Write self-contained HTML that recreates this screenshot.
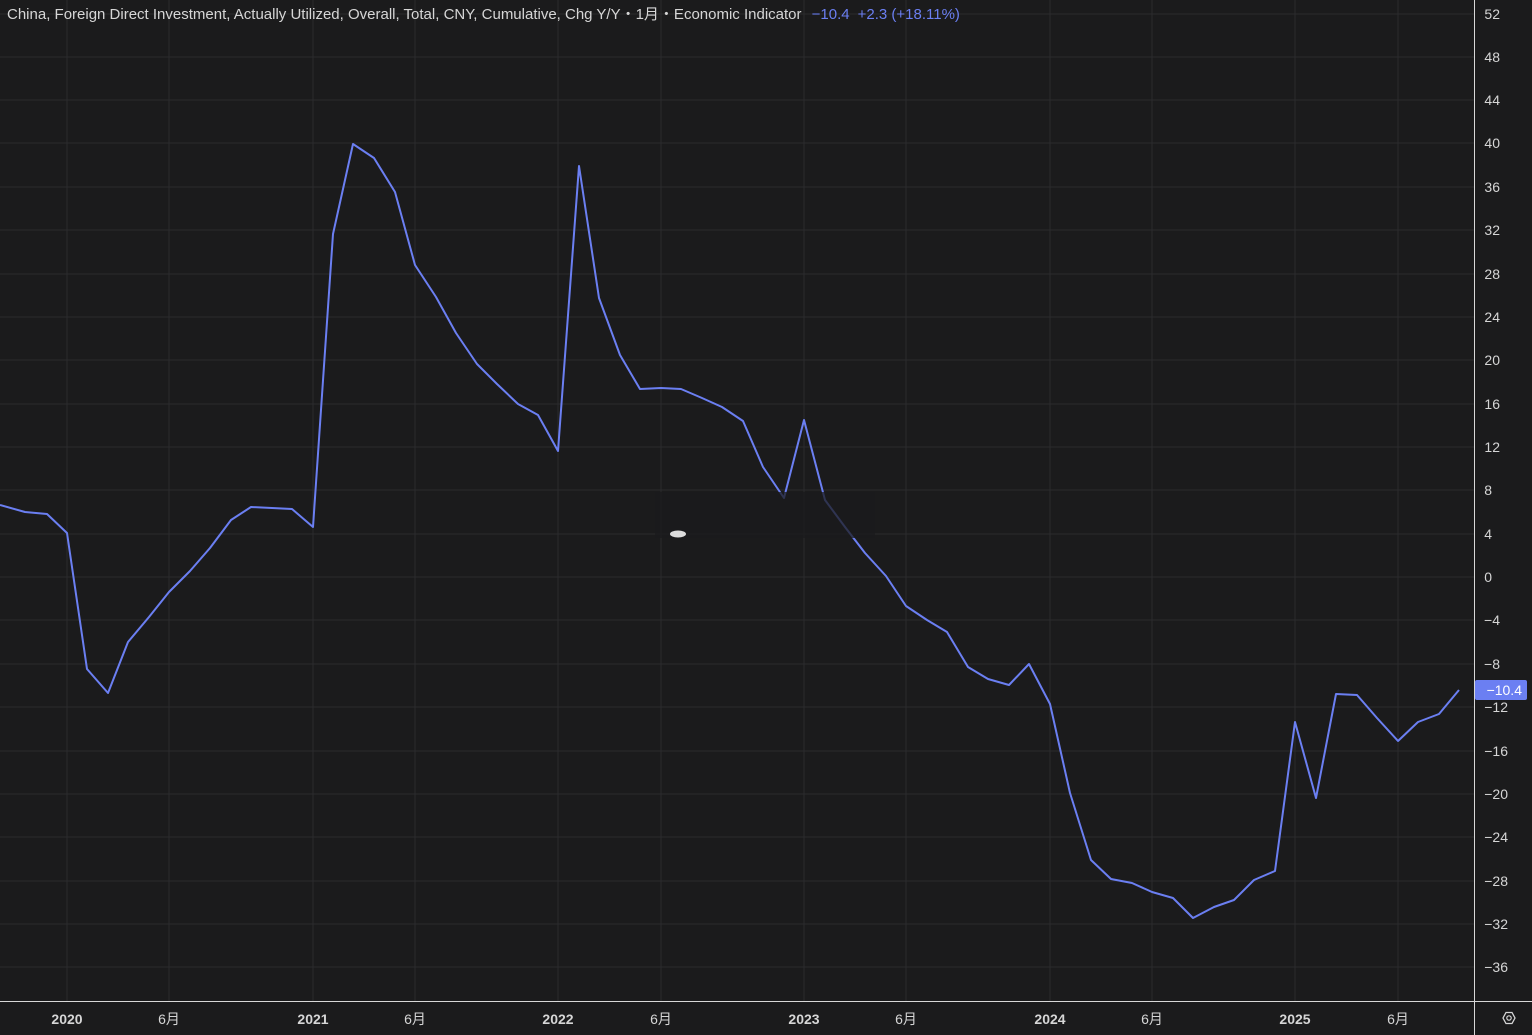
<!DOCTYPE html>
<html><head><meta charset="utf-8"><style>
html,body{margin:0;padding:0;background:#1b1b1c;width:1532px;height:1035px;overflow:hidden}
svg{display:block}
text{font-family:"Liberation Sans","Noto Sans CJK SC",sans-serif}
</style></head><body>
<svg width="1532" height="1035" viewBox="0 0 1532 1035" xmlns="http://www.w3.org/2000/svg">
<rect width="1532" height="1035" fill="#1b1b1c"/>
<g stroke="#2b2b2d" stroke-width="1">
<line x1="0" y1="14" x2="1474" y2="14"/><line x1="0" y1="57" x2="1474" y2="57"/><line x1="0" y1="100" x2="1474" y2="100"/><line x1="0" y1="143" x2="1474" y2="143"/><line x1="0" y1="187" x2="1474" y2="187"/><line x1="0" y1="230" x2="1474" y2="230"/><line x1="0" y1="274" x2="1474" y2="274"/><line x1="0" y1="317" x2="1474" y2="317"/><line x1="0" y1="360" x2="1474" y2="360"/><line x1="0" y1="404" x2="1474" y2="404"/><line x1="0" y1="447" x2="1474" y2="447"/><line x1="0" y1="490" x2="1474" y2="490"/><line x1="0" y1="534" x2="1474" y2="534"/><line x1="0" y1="577" x2="1474" y2="577"/><line x1="0" y1="620" x2="1474" y2="620"/><line x1="0" y1="664" x2="1474" y2="664"/><line x1="0" y1="707" x2="1474" y2="707"/><line x1="0" y1="751" x2="1474" y2="751"/><line x1="0" y1="794" x2="1474" y2="794"/><line x1="0" y1="837" x2="1474" y2="837"/><line x1="0" y1="881" x2="1474" y2="881"/><line x1="0" y1="924" x2="1474" y2="924"/><line x1="0" y1="967" x2="1474" y2="967"/>
<line x1="67" y1="0" x2="67" y2="1001"/><line x1="169" y1="0" x2="169" y2="1001"/><line x1="313" y1="0" x2="313" y2="1001"/><line x1="415" y1="0" x2="415" y2="1001"/><line x1="558" y1="0" x2="558" y2="1001"/><line x1="661" y1="0" x2="661" y2="1001"/><line x1="804" y1="0" x2="804" y2="1001"/><line x1="906" y1="0" x2="906" y2="1001"/><line x1="1050" y1="0" x2="1050" y2="1001"/><line x1="1152" y1="0" x2="1152" y2="1001"/><line x1="1295" y1="0" x2="1295" y2="1001"/><line x1="1398" y1="0" x2="1398" y2="1001"/>
</g>
<line x1="1474.5" y1="0" x2="1474.5" y2="1035" stroke="#d8d8d8" stroke-width="1"/>
<line x1="0" y1="1001.5" x2="1532" y2="1001.5" stroke="#d8d8d8" stroke-width="1"/>
<polyline fill="none" stroke="#6b7ff2" stroke-width="2" stroke-linejoin="round" points="0,505 25,512 47,514 67,533 87,669 108,693 128,642 149,617 169,592 190,571 210,548 231,520 251,507 272,508 292,509 313,527 333,234 353,144 374,158 395,192 415,265 436,297 456,333 477,364 497,384 518,404 538,415 558,451 579,166 599,298 620,355 640,389 661,388 681,389 702,398 722,407 743,421 763,467 784,498 804,420 825,500 845,527 865,553 886,576 906,606 927,620 947,632 968,667 988,679 1009,685 1029,664 1050,704 1070,793 1091,860 1111,879 1132,883 1152,892 1173,898 1193,918 1214,907 1234,900 1254,880 1275,871 1295,722 1316,798 1336,694 1357,695 1377,718 1398,741 1418,722 1439,714 1459,690"/>
<rect x="655" y="492" width="220" height="46" fill="#1b1b1c" opacity="0.75"/>
<ellipse cx="678" cy="534" rx="8" ry="3.5" fill="#dcdcdc"/>
<g fill="#d6d6d6" font-size="14" text-anchor="end">
<text x="1500" y="19">52</text><text x="1500" y="62">48</text><text x="1500" y="105">44</text><text x="1500" y="148">40</text><text x="1500" y="192">36</text><text x="1500" y="235">32</text><text x="1500" y="279">28</text><text x="1500" y="322">24</text><text x="1500" y="365">20</text><text x="1500" y="409">16</text><text x="1500" y="452">12</text><text x="1492" y="495">8</text><text x="1492" y="539">4</text><text x="1492" y="582">0</text><text x="1500" y="625">−4</text><text x="1500" y="669">−8</text><text x="1508" y="712">−12</text><text x="1508" y="756">−16</text><text x="1508" y="799">−20</text><text x="1508" y="842">−24</text><text x="1508" y="886">−28</text><text x="1508" y="929">−32</text><text x="1508" y="972">−36</text>
</g>
<rect x="1475" y="680" width="52" height="20" rx="2" fill="#6b7ff2"/>
<text x="1522" y="695" fill="#fff" font-size="14" text-anchor="end">−10.4</text>
<g fill="#d6d6d6" font-size="14" text-anchor="middle">
<text x="67" y="1024" font-weight="bold">2020</text><text x="169" y="1024">6月</text>
<text x="313" y="1024" font-weight="bold">2021</text><text x="415" y="1024">6月</text>
<text x="558" y="1024" font-weight="bold">2022</text><text x="661" y="1024">6月</text>
<text x="804" y="1024" font-weight="bold">2023</text><text x="906" y="1024">6月</text>
<text x="1050" y="1024" font-weight="bold">2024</text><text x="1152" y="1024">6月</text>
<text x="1295" y="1024" font-weight="bold">2025</text><text x="1398" y="1024">6月</text>
</g>
<polygon points="1503,1018 1506,1012.5 1512,1012.5 1515,1018 1512,1023.5 1506,1023.5" fill="none" stroke="#d6d6d6" stroke-width="1.3"/>
<circle cx="1509" cy="1018" r="2.2" fill="none" stroke="#d6d6d6" stroke-width="1.2"/>
<text x="7" y="19" font-size="15" fill="#d6d6d6">China, Foreign Direct Investment, Actually Utilized, Overall, Total, CNY, Cumulative, Chg Y/Y・1月・Economic Indicator <tspan fill="#6b7ff2" dx="6">−10.4</tspan><tspan fill="#6b7ff2" dx="8">+2.3 (+18.11%)</tspan></text>
</svg>
</body></html>
